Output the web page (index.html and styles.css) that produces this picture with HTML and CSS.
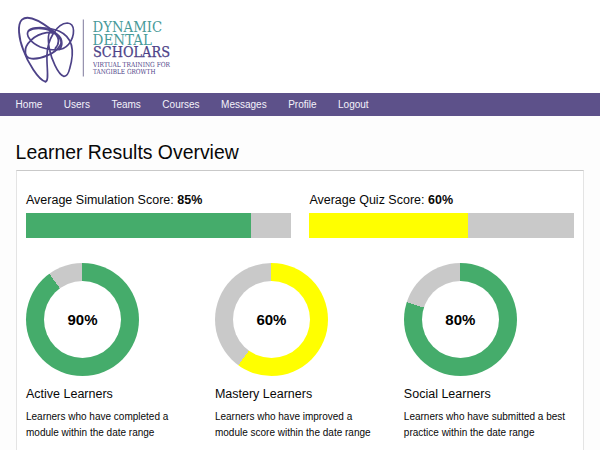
FILE: index.html
```html
<!DOCTYPE html>
<html lang="en">
<head>
<meta charset="utf-8">
<title>Learner Results Overview</title>
<link rel="stylesheet" href="styles.css">
</head>
<body>
<header class="header">
  <svg class="logo" width="170" height="80" viewBox="10 10 170 80" role="img" aria-label="Dynamic Dental Scholars">
    <g class="tooth" transform="translate(16 14) scale(.33333)">
      <path d="M88 203C67 198 35 145 22 108C8 72 3 31 18 17C36 1 76 24 105 46C133 66 146 91 130 106"/>
      <path class="thin" d="M88 203C101 202 91 157 93 122C94 78 122 28 154 27C178 28 178 65 158 91C139 115 103 109 73 99C44 87 27 62 38 50C51 36 105 40 130 52C174 72 174 120 161 164C157 181 153 188 143 187C125 181 106 133 100 105C95 76 94 55 107 49"/>
      <path d="M28 115C25 91 56 61 92 56C125 52 145 75 132 95C117 119 76 136 47 134C34 133 28 125 28 115Z"/>
      <path d="M38 50C57 38 99 42 116 57C132 72 130 90 118 103"/>
    </g>
    <path class="divider" d="M83.3 19.5V76.5"/>
    <g class="teal big">
      <text x="92.6" y="32.2" textLength="69.5" lengthAdjust="spacingAndGlyphs">DYNAMIC</text>
      <text x="92.6" y="44.9" textLength="59.5" lengthAdjust="spacingAndGlyphs">DENTAL</text>
    </g>
    <text class="purple big strong" x="93" y="57.4" textLength="77" lengthAdjust="spacingAndGlyphs">SCHOLARS</text>
    <g class="purple small">
      <text x="93" y="67" textLength="77" lengthAdjust="spacingAndGlyphs">VIRTUAL TRAINING FOR</text>
      <text x="93" y="74.3" textLength="62.5" lengthAdjust="spacingAndGlyphs">TANGIBLE GROWTH</text>
    </g>
  </svg>
</header>
<nav class="nav">
  <a>Home</a><a>Users</a><a>Teams</a><a>Courses</a><a>Messages</a><a>Profile</a><a>Logout</a>
</nav>
<main class="main">
  <h1>Learner Results Overview</h1>
  <section class="panel">
    <div class="scores">
      <div>
        <p class="label">Average Simulation Score: <b>85%</b></p>
        <div class="bar"><div class="fill green" style="width:85%"></div></div>
      </div>
      <div>
        <p class="label">Average Quiz Score: <b>60%</b></p>
        <div class="bar"><div class="fill yellow" style="width:60%"></div></div>
      </div>
    </div>
    <div class="stats">
      <article>
        <div class="donut green-ring" style="--value:90%"><span>90%</span></div>
        <h2>Active Learners</h2>
        <p>Learners who have completed a<br>module within the date range</p>
      </article>
      <article>
        <div class="donut yellow-ring" style="--value:60%"><span>60%</span></div>
        <h2>Mastery Learners</h2>
        <p>Learners who have improved a<br>module score within the date range</p>
      </article>
      <article>
        <div class="donut green-ring" style="--value:80%"><span>80%</span></div>
        <h2>Social Learners</h2>
        <p>Learners who have submitted a best<br>practice within the date range</p>
      </article>
    </div>
  </section>
</main>
</body>
</html>
```
FILE: styles.css
```css
* { box-sizing: border-box; }
body {
  margin: 0;
  background: #fdfdfd;
  color: #080808;
  font-family: "Liberation Sans", Arial, sans-serif;
}
h1, h2, p { margin: 0; font-weight: 400; }
.header { height: 93px; padding: 10px 0 0 10px; background: #fff; }
.logo { display: block; }
.tooth { fill: none; stroke: #4d4288; stroke-width: 5.6; stroke-linecap: round; }
.thin { stroke-width: 5; }
.divider { stroke: #7d789b; stroke-width: 1; }
.logo text { font-family: "DejaVu Serif", serif; }
.big { font-size: 14.2px; }
.small { font-size: 7px; }
.teal { fill: #479a99; }
.purple { fill: #4d4288; }
.strong { stroke: #4d4288; stroke-width: .25; }
.nav {
  display: flex;
  gap: 21.5px;
  height: 23px;
  padding-left: 15.6px;
  background: #5d518a;
  color: #f4f2fa;
  font-size: 10px;
  line-height: 23px;
}
.main { padding: 23px 15.6px 0; }
h1 { height: 31px; font-size: 19.4px; line-height: 27px; }
.panel {
  height: 280px;
  padding: 19px 9.4px 0;
  border: 1px solid #e4e4e4;
  border-top-color: #c9c9c9;
  border-bottom: 0;
  background: #fff;
}
.scores { display: grid; grid-template-columns: 1fr 1fr; gap: 18.8px; }
.label { height: 23px; font-size: 12.5px; line-height: 20px; }
.bar { height: 25px; background: #c9c9c9; }
.fill { height: 100%; }
.green { background: #45ac6b; }
.yellow { background: #ff0; }
.stats {
  display: grid;
  grid-template-columns: repeat(3, 1fr);
  gap: 18.8px;
  padding-top: 25px;
}
.donut {
  display: grid;
  place-items: center;
  width: 113px;
  height: 113px;
  border-radius: 50%;
  background: conic-gradient(var(--ring) var(--value), #c9c9c9 0);
}
.green-ring { --ring: #45ac6b; }
.yellow-ring { --ring: #ff0; }
.donut span {
  width: 77px;
  height: 77px;
  border-radius: 50%;
  background: #fff;
  color: #000;
  font-size: 15px;
  font-weight: 700;
  line-height: 77px;
  text-align: center;
}
h2 { margin-top: 8px; height: 25px; font-size: 12.5px; line-height: 21px; }
.stats p { font-size: 10px; line-height: 16px; white-space: nowrap; }
```
